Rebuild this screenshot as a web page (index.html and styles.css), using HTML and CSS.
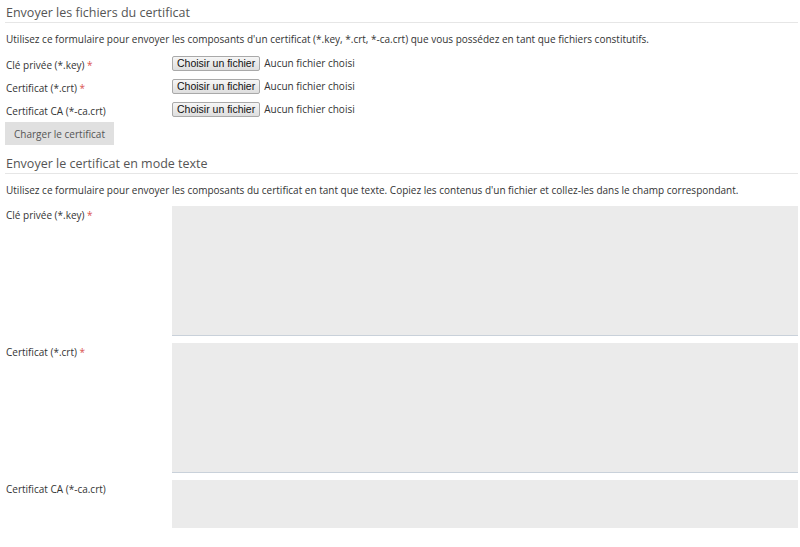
FILE: index.html
```html
<!DOCTYPE html>
<html lang="fr">
<head>
<meta charset="utf-8">
<link rel="stylesheet" href="styles.css">
</head>
<body>
<div class="page">
  <section class="section">
    <h2 class="title">Envoyer les fichiers du certificat</h2>
    <p class="desc">Utilisez ce formulaire pour envoyer les composants d'un certificat (*.key, *.crt, *-ca.crt) que vous possédez en tant que fichiers constitutifs.</p>
    <div class="file-row">
      <label class="label fl">Clé privée (*.key) <span class="req">*</span></label>
      <div class="file"><span class="file-btn">Choisir un fichier</span><span class="file-none">Aucun fichier choisi</span></div>
    </div>
    <div class="file-row">
      <label class="label fl">Certificat (*.crt) <span class="req">*</span></label>
      <div class="file"><span class="file-btn">Choisir un fichier</span><span class="file-none">Aucun fichier choisi</span></div>
    </div>
    <div class="file-row">
      <label class="label fl">Certificat CA (*-ca.crt)</label>
      <div class="file"><span class="file-btn">Choisir un fichier</span><span class="file-none">Aucun fichier choisi</span></div>
    </div>
    <button class="submit" type="button">Charger le certificat</button>
  </section>
  <section class="section second">
    <h2 class="title">Envoyer le certificat en mode texte</h2>
    <p class="desc">Utilisez ce formulaire pour envoyer les composants du certificat en tant que texte. Copiez les contenus d'un fichier et collez-les dans le champ correspondant.</p>
    <div class="text-row">
      <label class="label tl">Clé privée (*.key) <span class="req">*</span></label>
      <textarea class="area"></textarea>
    </div>
    <div class="text-row">
      <label class="label tl">Certificat (*.crt) <span class="req">*</span></label>
      <textarea class="area"></textarea>
    </div>
    <div class="text-row">
      <label class="label tl">Certificat CA (*-ca.crt)</label>
      <textarea class="area short"></textarea>
    </div>
  </section>
</div>
</body>
</html>
```
FILE: styles.css
```css
html, body {
  margin: 0;
  padding: 0;
  background: #fff;
}
body {
  font-family: "Open Sans", "Liberation Sans", sans-serif;
  font-size: 10px;
  color: #333;
}
.page {
  width: 793px;
  margin-left: 5px;
  padding-top: 4px;
}
.title {
  margin: 0;
  font-size: 12.5px;
  font-weight: normal;
  line-height: 18px;
  color: #555;
  padding-left: 1px;
  border-bottom: 1px solid #e6e6e6;
}
.second {
  margin-top: 10px;
}
.desc {
  margin: 9px 0 0 1px;
  line-height: 15px;
}
.file-row {
  display: flex;
  align-items: center;
  height: 23px;
}
.section .file-row:first-of-type {
  margin-top: 6px;
}
.label {
  width: 166px;
  padding-left: 1px;
  line-height: 15px;
  flex: none;
}
.fl {
  padding-top: 2px;
}
.req {
  color: #d9534f;
}
.file {
  display: flex;
  align-items: center;
  margin-top: -3px;
}
.file-btn {
  font-family: "Liberation Sans", Arial, sans-serif;
  font-size: 10.5px;
  color: #111;
  height: 13px;
  line-height: 13px;
  padding: 0 4px;
  border: 1px solid #a9a9a9;
  border-radius: 2px;
  background: linear-gradient(#f6f6f6, #dedede);
}
.file-none {
  margin-left: 4px;
  color: #333;
}
.submit {
  display: block;
  margin: 0;
  height: 23px;
  width: 109px;
  border: none;
  background: #e0e0e0;
  color: #555;
  font-family: "Open Sans", "Liberation Sans", sans-serif;
  font-size: 10px;
  padding: 0;
}
.text-row {
  display: flex;
  align-items: flex-start;
  margin-top: 7px;
}
.second .desc + .text-row {
  margin-top: 8px;
}
.tl {
  padding-top: 2px;
}
.area {
  flex: 1;
  height: 129px;
  margin: 0;
  padding: 0;
  border: none;
  border-bottom: 1px solid #c9d1da;
  background: #ebebeb;
  resize: none;
  display: block;
}
.area.short {
  height: 48px;
  border-bottom: none;
}
```
